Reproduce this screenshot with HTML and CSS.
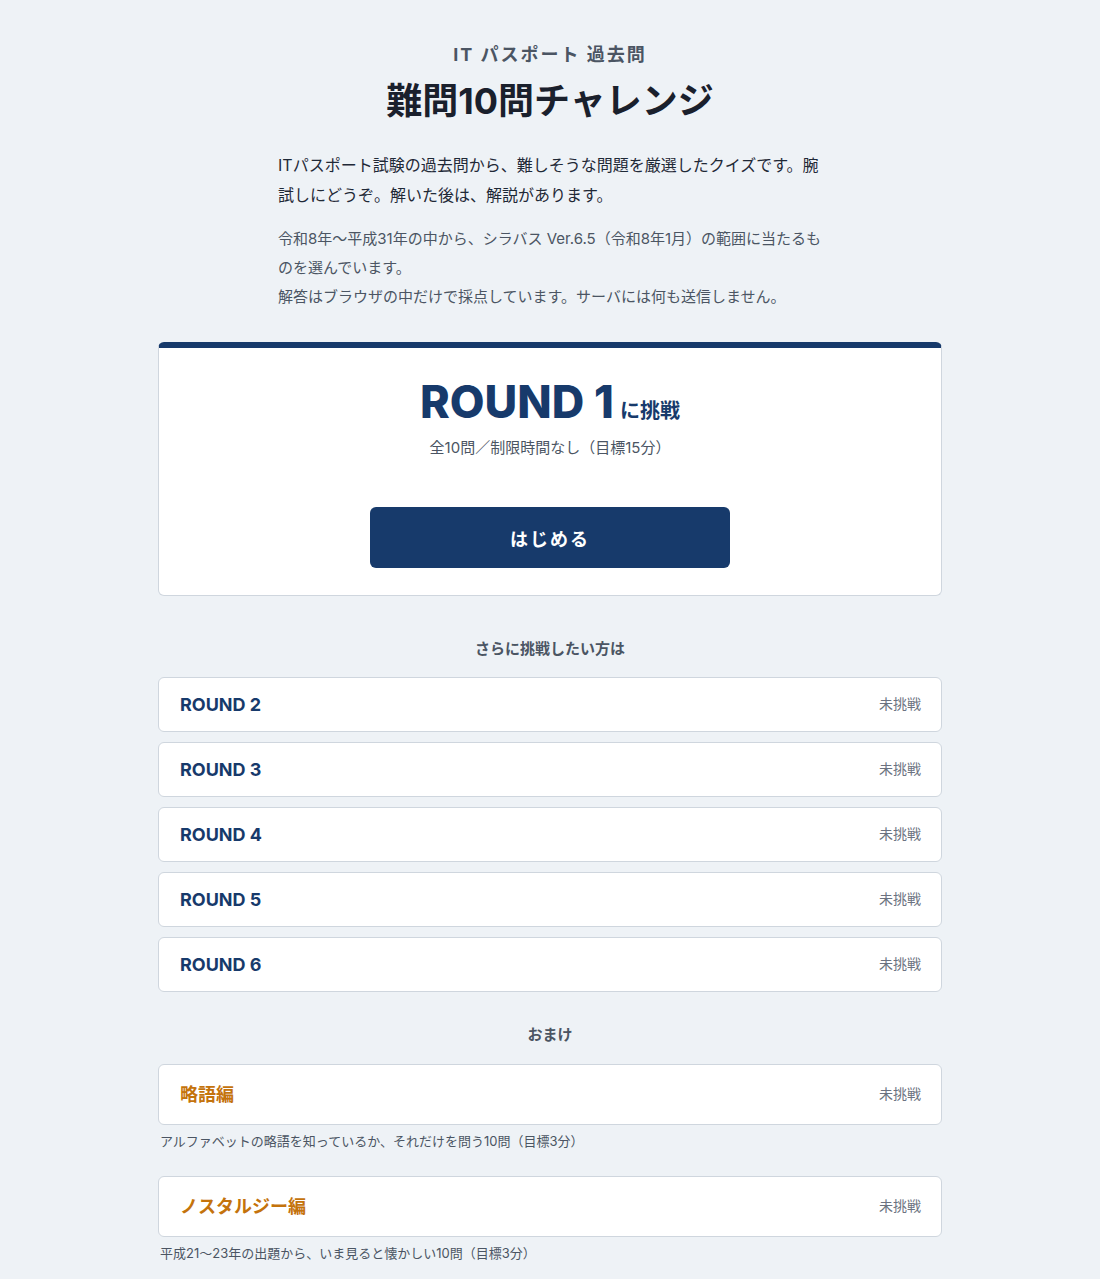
FILE: index.html
```html
<!DOCTYPE html>
<html lang="ja">
<head>
<meta charset="utf-8">
<title>難問10問チャレンジ</title>
<link rel="stylesheet" href="styles.css">
</head>
<body>
<main class="page">
  <header class="hero">
    <p class="eyebrow">IT パスポート 過去問</p>
    <h1 class="title">難問10問チャレンジ</h1>
  </header>
  <section class="intro">
    <p class="lead">ITパスポート試験の過去問から、難しそうな問題を厳選したクイズです。腕試しにどうぞ。解いた後は、解説があります。</p>
    <p class="note">令和8年〜平成31年の中から、シラバス Ver.6.5（令和8年1月）の範囲に当たるものを選んでいます。<br>解答はブラウザの中だけで採点しています。サーバには何も送信しません。</p>
  </section>

  <section class="main-card">
    <h2 class="round-title"><span class="round-big">ROUND 1</span><span class="round-small">に挑戦</span></h2>
    <p class="round-sub">全10問／制限時間なし（目標15分）</p>
    <button class="start-btn" type="button">はじめる</button>
  </section>

  <h3 class="section-label">さらに挑戦したい方は</h3>
  <ul class="round-list">
    <li class="row"><span class="row-title">ROUND 2</span><span class="row-status">未挑戦</span></li>
    <li class="row"><span class="row-title">ROUND 3</span><span class="row-status">未挑戦</span></li>
    <li class="row"><span class="row-title">ROUND 4</span><span class="row-status">未挑戦</span></li>
    <li class="row"><span class="row-title">ROUND 5</span><span class="row-status">未挑戦</span></li>
    <li class="row"><span class="row-title">ROUND 6</span><span class="row-status">未挑戦</span></li>
  </ul>

  <h3 class="section-label bonus-label">おまけ</h3>
  <div class="bonus-list">
    <div class="bonus">
      <div class="row row-tall"><span class="row-title orange">略語編</span><span class="row-status">未挑戦</span></div>
      <p class="bonus-desc">アルファベットの略語を知っているか、それだけを問う10問（目標3分）</p>
    </div>
    <div class="bonus">
      <div class="row row-tall"><span class="row-title orange">ノスタルジー編</span><span class="row-status">未挑戦</span></div>
      <p class="bonus-desc">平成21〜23年の出題から、いま見ると懐かしい10問（目標3分）</p>
    </div>
  </div>
</main>
</body>
</html>
```

FILE: styles.css
```css
* { box-sizing: border-box; }
html, body { margin: 0; padding: 0; }
body {
  background: #eef2f6;
  color: #1f2937;
  font-family: Inter, "Noto Sans CJK JP", sans-serif;
}
.page {
  width: 784px;
  margin: 0 auto;
  padding: 41px 0 20px;
}
.hero { text-align: center; }
.eyebrow {
  margin: 0;
  font-size: 18px;
  font-weight: 700;
  letter-spacing: 2px;
  color: #4b5563;
  line-height: 28px;
}
.title {
  margin: 7px 0 0;
  font-size: 36px;
  font-weight: 700;
  color: #1a202c;
  line-height: 50px;
}
.intro {
  width: 544px;
  margin: 24px auto 0;
}
.lead {
  margin: 0;
  font-size: 16px;
  line-height: 30px;
  color: #1f2937;
}
.note {
  margin: 14px 0 0;
  font-size: 15px;
  line-height: 29px;
  color: #4b5563;
}
.main-card {
  margin-top: 31px;
  background: #fff;
  border: 1px solid #cfd6de;
  border-top: 6px solid #173a6b;
  border-radius: 6px;
  text-align: center;
  padding: 26px 0 27px;
}
.round-title {
  margin: 0;
  height: 56px;
  display: flex;
  justify-content: center;
  align-items: baseline;
  color: #173a6b;
  line-height: 56px;
}
.round-big {
  font-size: 45px;
  font-weight: 800;
}
.round-small {
  font-size: 20px;
  font-weight: 700;
  margin-left: 6px;
}
.round-sub {
  margin: 6px 0 0;
  font-size: 15px;
  color: #4b5563;
  line-height: 24px;
}
.start-btn {
  display: block;
  margin: 47px auto 0;
  width: 360px;
  height: 61px;
  border: 0;
  border-radius: 6px;
  background: #173a6b;
  color: #fff;
  font-family: Inter, "Noto Sans CJK JP", sans-serif;
  font-size: 18px;
  font-weight: 700;
  letter-spacing: 2px;
}
.section-label {
  margin: 41px 0 0;
  text-align: center;
  font-size: 15px;
  font-weight: 700;
  color: #4b5563;
  line-height: 24px;
}
.round-list {
  list-style: none;
  margin: 16px 0 0;
  padding: 0;
  display: flex;
  flex-direction: column;
  gap: 10px;
}
.row {
  display: flex;
  align-items: center;
  justify-content: space-between;
  height: 55px;
  padding: 0 20px 0 21px;
  background: #fff;
  border: 1px solid #cfd6de;
  border-radius: 6px;
}
.row-tall { height: 61px; }
.row-title {
  font-size: 18px;
  font-weight: 700;
  color: #173a6b;
  line-height: 24px;
}
.row-title.orange { color: #c4730c; }
.row-status {
  font-size: 14px;
  color: #6b7280;
  line-height: 20px;
  margin-bottom: 2px;
}
.bonus-label { margin-top: 31px; }
.bonus-list {
  margin-top: 17px;
  display: flex;
  flex-direction: column;
  gap: 24px;
}
.bonus-desc {
  margin: 5px 0 0 2px;
  font-size: 13px;
  line-height: 22px;
  color: #4b5563;
}
```
